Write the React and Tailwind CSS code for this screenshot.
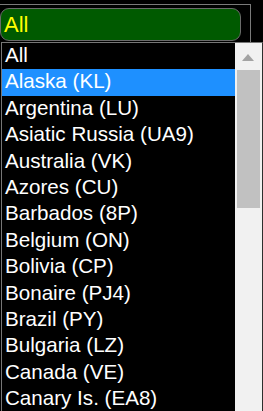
import React from "react";

const items = [
  "All",
  "Alaska (KL)",
  "Argentina (LU)",
  "Asiatic Russia (UA9)",
  "Australia (VK)",
  "Azores (CU)",
  "Barbados (8P)",
  "Belgium (ON)",
  "Bolivia (CP)",
  "Bonaire (PJ4)",
  "Brazil (PY)",
  "Bulgaria (LZ)",
  "Canada (VE)",
  "Canary Is. (EA8)",
];

export default function App() {
  return (
    <div className="w-[263px] h-[411px] bg-black overflow-hidden font-['Liberation_Sans',Arial,sans-serif]">
      <div className="pt-[4px]">
        <div className="w-[251px] h-[38px] border-t border-r border-[#7a7a7a] pt-[3px]">
          <div className="w-[241px] h-[33px] rounded-[9px] border border-[#6a6a6a] bg-[#005a00] text-[#ffff00] text-[22px] leading-none flex items-center pl-[3px]">
            All
          </div>
        </div>
      </div>
      <div className="ml-px h-[369px] border-t border-l border-r border-t-[#767676] border-l-[#767676] border-r-[#2e2e2e] flex">
        <div className="flex-1 flex flex-col bg-black">
          {items.map((it, i) => (
            <div
              key={it}
              className={
                "shrink-0 h-[26.4px] pl-[3px] pt-px text-[20.6px] leading-[22px] text-white whitespace-nowrap " +
                (i === 1 ? "bg-[#1e90ff]" : "")
              }
            >
              {it}
            </div>
          ))}
        </div>
        <div className="w-[27px] bg-[#f1f1f1] flex flex-col">
          <div className="h-[26.7px] flex justify-center pt-[11px] pr-px">
            <div className="w-0 h-0 border-l-[6px] border-r-[6px] border-b-[7px] border-l-transparent border-r-transparent border-b-[#a3a3a3]" />
          </div>
          <div className="mx-[2px] h-[138px] bg-[#c1c1c1]" />
        </div>
      </div>
    </div>
  );
}
